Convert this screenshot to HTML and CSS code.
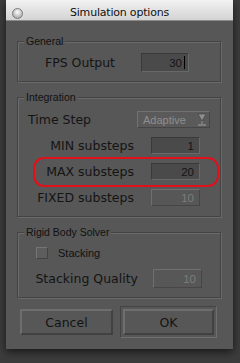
FILE: index.html
```html
<!DOCTYPE html>
<html lang="en">

<head>
    <meta charset="UTF-8">
    <meta name="viewport" content="width=device-width, initial-scale=1.0">
    <title>Simulation options</title>
    <link rel="stylesheet" href="styles.css">
</head>

<body>

    <div class="window">
        <!-- Title bar -->
        <div class="titlebar">
            <span class="close-btn"></span>
            <span class="title">Simulation options</span>
        </div>

        <div class="content">
            <fieldset class="group general">
                <legend>General</legend>
                <div class="row fps-row">
                    <label>FPS Output</label>
                    <span class="field-wrap">
                        <input type="text" class="field big" value="30" readonly>
                        <span class="caret"></span>
                    </span>
                </div>
            </fieldset>

            <fieldset class="group integration">
                <legend>Integration</legend>
                <div class="row step-row">
                    <label>Time Step</label>
                    <div class="dropdown">
                        <span>Adaptive</span>
                        <svg width="10" height="15" viewBox="0 0 10 15">
                            <path d="M1 2 H9 L5 9 Z" fill="#8e8e8e" stroke="#3e3e3e" stroke-width="0.6"/>
                            <path d="M5 9 V12" stroke="#8e8e8e" stroke-width="1.2"/>
                            <path d="M1 13 H9" stroke="#8e8e8e" stroke-width="1.4"/>
                        </svg>
                    </div>
                </div>
                <div class="row sub-row">
                    <label>MIN substeps</label>
                    <input type="text" class="field" value="1" readonly>
                </div>
                <div class="row sub-row marked">
                    <label>MAX substeps</label>
                    <input type="text" class="field" value="20" readonly>
                </div>
                <div class="row sub-row">
                    <label>FIXED substeps</label>
                    <input type="text" class="field disabled" value="10" disabled>
                </div>
            </fieldset>

            <fieldset class="group rigid">
                <legend>Rigid Body Solver</legend>
                <div class="row check-row">
                    <input type="checkbox" class="check" id="stacking">
                    <label for="stacking">Stacking</label>
                </div>
                <div class="row quality-row">
                    <label>Stacking Quality</label>
                    <input type="text" class="field big disabled" value="10" disabled>
                </div>
            </fieldset>

            <div class="buttons">
                <button class="btn cancel-btn">Cancel</button>
                <span class="default-frame">
                    <button class="btn ok-btn">OK</button>
                </span>
            </div>
        </div>
    </div>

</body>

</html>
```

FILE: styles.css
```css
body {
    margin: 0;
    height: 363px;
    background-color: #3c3c3c;
    font-family: "DejaVu Sans", Verdana, sans-serif;
    color: #141414;
    overflow: hidden;
}

.window {
    width: 227px;
    margin-left: 6px;
    background-color: #575757;
    box-shadow: 0 3px 8px rgba(0, 0, 0, 0.6);
}

/* Title bar */
.titlebar {
    position: relative;
    height: 21px;
    display: flex;
    align-items: center;
    justify-content: center;
    background: linear-gradient(#f2f2f2, #d3d3d3);
    border-bottom: 1px solid #8a8a8a;
    box-sizing: border-box;
}

.close-btn {
    position: absolute;
    left: 6px;
    top: 8px;
    width: 11px;
    height: 11px;
    border-radius: 50%;
    border: 1px solid #7b7b7b;
    box-sizing: border-box;
    background: radial-gradient(circle at 50% 35%, #ffffff, #c4c4c4 55%, #9a9a9a);
}

.title {
    font-size: 11px;
    letter-spacing: -0.2px;
    color: #111;
    margin-top: 4px;
}

.content {
    padding: 14px 12px 11px 11px;
}

/* Groups */
.group {
    margin: 0;
    padding: 0;
    min-width: 0;
    border: 1px solid #444444;
    box-shadow: inset 1px 1px 0 #6a6a6a, 1px 1px 0 #6a6a6a;
}

    .group legend {
        margin-left: 6px;
        padding: 0 2px;
        background-color: #575757;
        font-family: "Liberation Sans", Arial, sans-serif;
        font-size: 10.5px;
        line-height: 12px;
        color: #111111;
    }

.general {
    padding: 6px 0 9px 0;
}

.integration {
    margin-top: 9px;
    padding: 8px 0 10px 0;
}

.rigid {
    margin-top: 9px;
    padding: 8px 0 9px 0;
}

.row {
    display: flex;
    align-items: center;
    font-size: 12.5px;
    color: #141414;
}

    .row label {
        flex: none;
    }

.fps-row label {
    width: 97px;
    text-align: right;
    margin-right: 26px;
}

.step-row {
    height: 17px;
    padding: 0 10px;
    justify-content: space-between;
}

.sub-row {
    height: 17px;
    margin-top: 9px;
}

    .sub-row label {
        width: 116px;
        text-align: right;
        margin-right: 17px;
    }

.quality-row {
    height: 19px;
    margin-top: 9px;
}

    .quality-row label {
        width: 120px;
        text-align: right;
        margin-right: 15px;
    }

.check-row {
    height: 14px;
    padding-left: 18px;
}

    .check-row label {
        font-family: "Liberation Sans", Arial, sans-serif;
        font-size: 11px;
        margin-left: 10px;
        color: #111111;
    }

/* Fields */
.field {
    width: 49px;
    height: 17px;
    box-sizing: border-box;
    margin: 0;
    padding: 0 5px 0 0;
    text-align: right;
    font-family: "Liberation Sans", Arial, sans-serif;
    font-size: 11.5px;
    color: #141414;
    background-color: #4a4a4a;
    border: 1px solid;
    border-color: #3a3a3a #686868 #686868 #3a3a3a;
    outline: none;
}

    .field.big {
        height: 19px;
    }

    .field.disabled {
        color: #7c7c7c;
        background-color: #575757;
        border-color: #6f6f6f #464646 #464646 #6f6f6f;
    }

.fps-row .field {
    width: 48px;
    padding-right: 6px;
}

.field-wrap {
    position: relative;
    display: flex;
}

.caret {
    position: absolute;
    right: 4px;
    top: 3px;
    width: 1px;
    height: 13px;
    background-color: #000;
}

.dropdown {
    width: 73px;
    height: 17px;
    box-sizing: border-box;
    display: flex;
    align-items: center;
    justify-content: space-between;
    padding: 0 2px 0 5px;
    background-color: #5a5a5a;
    border: 1px solid;
    border-color: #717171 #454545 #454545 #717171;
    color: #8e8e8e;
    font-family: "Liberation Sans", Arial, sans-serif;
    font-size: 11px;
}

    .dropdown svg {
        display: block;
    }

/* Highlighted row */
.marked {
    position: relative;
}

    .marked::after {
        content: "";
        position: absolute;
        left: 15px;
        right: 1px;
        top: -6px;
        bottom: -7px;
        border: 2px solid #e3101a;
        border-radius: 11px;
    }

.check {
    appearance: none;
    -webkit-appearance: none;
    margin: 0;
    width: 12px;
    height: 12px;
    background-color: #5d5d5d;
    border: 1px solid;
    border-color: #747474 #424242 #424242 #747474;
}

/* Buttons */
.buttons {
    display: flex;
    align-items: center;
    margin-top: 8px;
    padding: 0 1px 0 3px;
    gap: 7px;
}

.btn {
    height: 26px;
    box-sizing: border-box;
    background-color: #575757;
    border: 2px solid;
    border-color: #6e6e6e #414141 #414141 #6e6e6e;
    font-family: "DejaVu Sans", Verdana, sans-serif;
    font-size: 12.5px;
    color: #141414;
    padding: 0;
    cursor: pointer;
}

.cancel-btn {
    width: 93px;
}

.default-frame {
    display: flex;
    padding: 2px;
    border: 1px solid;
    border-color: #434343 #6e6e6e #6e6e6e #434343;
}

.ok-btn {
    width: 91px;
}
```
